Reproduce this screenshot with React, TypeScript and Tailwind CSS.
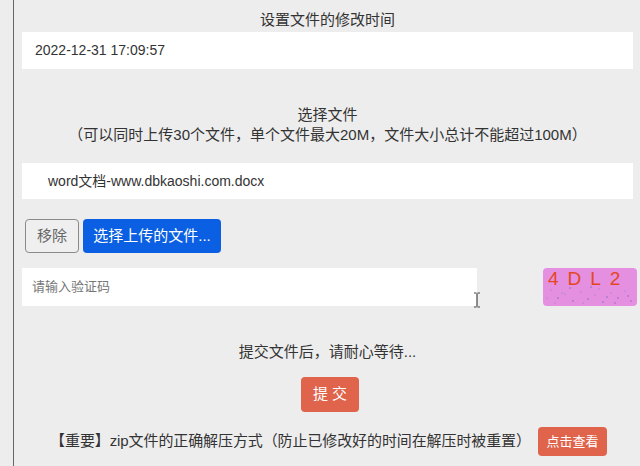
const font = { fontFamily: '"Liberation Sans", "Noto Sans CJK SC", sans-serif' };

function Captcha() {
  const dots = [
    [8, 22], [15, 30], [22, 26], [30, 33], [38, 24], [45, 31], [52, 27], [60, 34],
    [68, 25], [75, 30], [82, 23], [88, 33], [12, 35], [27, 20], [56, 21], [72, 35],
    [40, 35], [64, 29], [19, 25], [85, 28], [4, 30], [48, 19],
  ];
  return (
    <div className="relative w-[94px] h-[38px] rounded-[4px] bg-[#e58fe0] overflow-hidden">
      <svg className="absolute inset-0" width="94" height="38">
        {dots.map(([x, y], i) => (
          <circle key={i} cx={x} cy={y} r="0.9" fill={i % 2 ? '#a57ad0' : '#c288d8'} />
        ))}
      </svg>
      <div className="absolute left-[5px] top-[0px] text-[19px] leading-[22px] tracking-[9px] font-medium text-[#e2471f]" style={font}>
        4DL2
      </div>
    </div>
  );
}

export default function App() {
  return (
    <div className="w-[640px] h-[466px] bg-[#ededed] flex overflow-hidden text-[#333]" style={font}>
      <div className="w-[13px] shrink-0" />
      <div className="w-[1px] shrink-0 bg-[#666]" />
      <div className="flex-1 pl-[8px] pr-[7px] flex flex-col">
        <div className="mt-[10px] h-[20px] leading-[20px] text-center text-[15px]">设置文件的修改时间</div>
        <div className="mt-[2px] h-[37px] bg-white flex items-center pl-[13px] text-[14px]">2022-12-31 17:09:57</div>

        <div className="mt-[36px] h-[20px] leading-[20px] text-center text-[15px]">选择文件</div>
        <div className="h-[19px] leading-[19px] text-center text-[15px]">（可以同时上传30个文件，单个文件最大20M，文件大小总计不能超过100M）</div>
        <div className="mt-[19px] h-[36px] bg-white flex items-center pl-[26px] text-[14px]">word文档-www.dbkaoshi.com.docx</div>

        <div className="mt-[20px] flex gap-[4px] pl-[3px]">
          <button className="h-[34px] w-[54px] rounded-[4px] border border-[#8a8a8a] bg-[#efefef] text-[15px] text-[#666]">移除</button>
          <button className="h-[34px] w-[138px] rounded-[4px] bg-[#0b5fe3] text-[15px] text-white">选择上传的文件...</button>
        </div>

        <div className="mt-[15px] flex items-center justify-between -mr-[4px]">
          <div className="relative w-[455px] h-[38px] bg-white flex items-center pl-[10px] text-[13px] text-[#777]">
            请输入验证码
            <svg className="absolute left-[451px] top-[24px]" width="8" height="16" viewBox="0 0 8 16">
              <path d="M1 1h2.5M4.5 1H7M4 1.5v13M1 15h2.5M4.5 15H7" stroke="#444" strokeWidth="1.2" fill="none" />
            </svg>
          </div>
          <Captcha />
        </div>

        <div className="mt-[36px] h-[20px] leading-[20px] text-center text-[15px]">提交文件后，请耐心等待...</div>
        <div className="mt-[15px] flex justify-center pl-[5px]">
          <button className="h-[35px] w-[58px] rounded-[4px] bg-[#e0634b] text-[15px] text-white tracking-[4px] pl-[4px]">提交</button>
        </div>

        <div className="mt-[15px] flex items-center justify-center gap-[7px] pl-[2px]">
          <span className="text-[15px] tracking-[-0.1px]">【重要】zip文件的正确解压方式（防止已修改好的时间在解压时被重置）</span>
          <button className="h-[29px] w-[69px] rounded-[4px] bg-[#e0634b] text-[13px] text-white">点击查看</button>
        </div>
      </div>
    </div>
  );
}
